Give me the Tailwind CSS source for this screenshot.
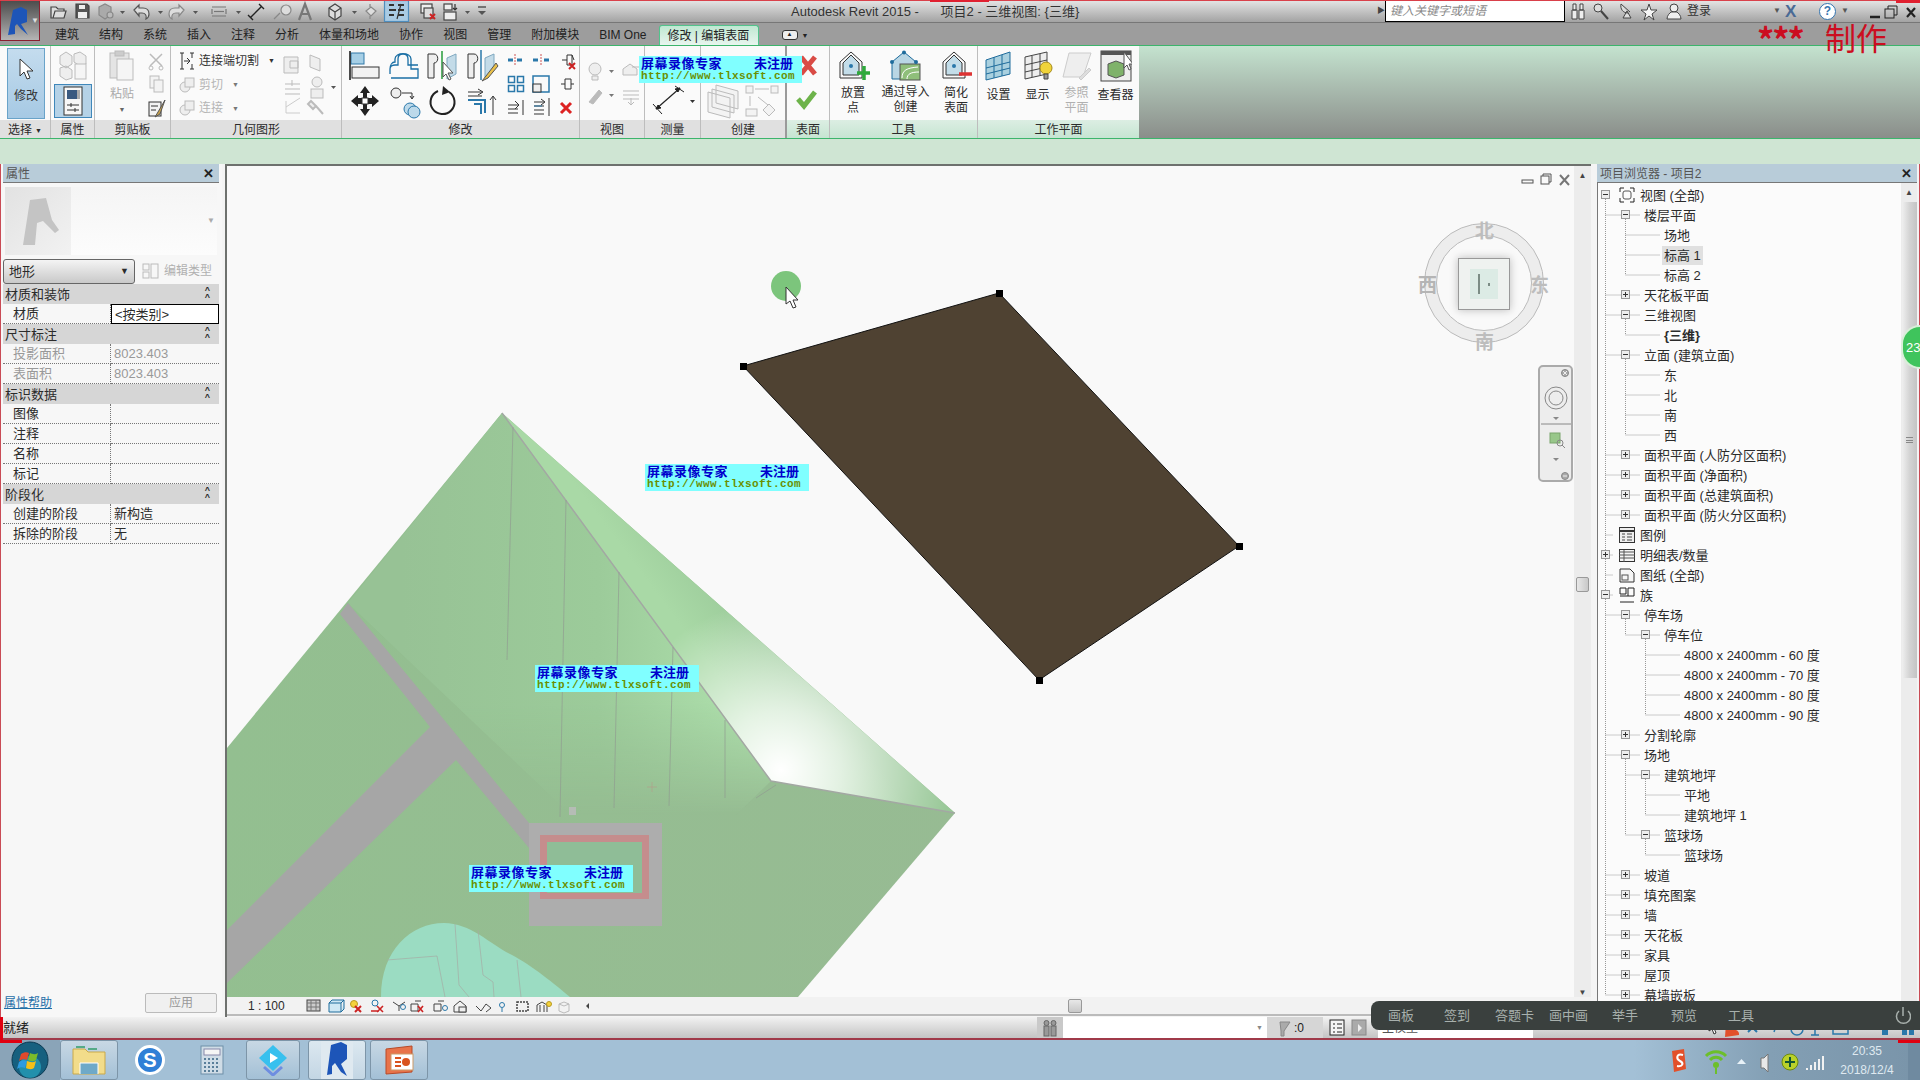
<!DOCTYPE html>
<html>
  <head>
    <meta charset="UTF-8" />
    <title>Autodesk Revit 2015</title>
    <script src="https://cdn.jsdelivr.net/npm/@tailwindcss/browser@4"></script>
  </head>
  <body class="relative flex flex-col w-[1920px] h-[1080px] overflow-hidden bg-[#f4f4f4] text-[12px] leading-none text-[#2b2b2b] font-['Liberation_Sans','Noto_Sans_CJK_SC',sans-serif]">
    <!-- title bar -->
    <header class="flex items-center h-[23px] pl-[46px] bg-gradient-to-b from-[#e6e6e6] to-[#a3a3a3] border-b border-[#777]">
      <svg class="w-[450px] h-[22px]" viewBox="46 0 450 22" fill="none" stroke="#444" stroke-width="1.2">
        <path d="M51 7h5l2 2h6v2H55l-2 7h-2zM53 18h11l2-7H55" fill="#ddd" />
        <path d="M76 4h11l2 2v12H76z" fill="#555" /><rect x="79" y="5" width="6" height="4" fill="#eee" stroke="none" /><rect x="78" y="12" width="9" height="6" fill="#eee" stroke="none" />
        <path d="M99 7l6-3 6 3v8l-6 4-6-4z" fill="#aaa" stroke="#888" /><circle cx="110" cy="15" r="3" fill="#bbb" stroke="#888" />
        <path d="M120 11h5l-2.500 3z" fill="#555" stroke="none" />
        <path d="M134 10l5-5v3h4c5 0 6 3 6 6 0 2-1 4-3 5 1-4-1-6-4-6h-3v3z" fill="#ddd" stroke="#555" />
        <path d="M158 11h5l-2.500 3z" fill="#555" stroke="none" />
        <path d="M184 10l-5-5v3h-4c-5 0-6 3-6 6 0 2 1 4 3 5-1-4 1-6 4-6h3v3z" fill="#ddd" stroke="#888" />
        <path d="M193 11h5l-2.500 3z" fill="#555" stroke="none" />
        <path d="M212 7h14M212 16h14M212 9v5M226 9v5" stroke="#777" /><path d="M214 11.500h10" stroke="#777" />
        <path d="M236 11h5l-2.500 3z" fill="#555" stroke="none" />
        <path d="M250 18l12-12M248 15l5 5M259 4l5 5" stroke="#222" stroke-width="1.4" />
        <circle cx="286" cy="10" r="5" fill="#ddd" stroke="#888" /><path d="M274 19l6-6" stroke="#888" />
        <path d="M299 20l6-16 6 16M301 14h8" stroke="#777" stroke-width="2.200" />
        <path d="M329 8l6-4 6 4v8l-6 4-6-4z" fill="#ddd" stroke="#444" /><path d="M329 8l6 4 6-4M335 12v8" />
        <path d="M352 11h5l-2.500 3z" fill="#555" stroke="none" />
        <path d="M370 4v3M370 16v3" stroke="#888" /><path d="M366 11l5-4 5 4-5 5z" fill="#ddd" stroke="#888" />
        <rect x="384.500" y="0.500" width="24" height="21" fill="#a9cbe4" stroke="#4f8dbd" />
        <path d="M389 5h5M389 10h7M389 15h5M398 5h6M398 10h6M398 15h6" stroke="#333" stroke-width="2" /><path d="M401 4l-4 15" stroke="#333" />
        <rect x="421" y="4" width="11" height="9" fill="#eee" /><rect x="424" y="8" width="9" height="10" fill="#ddd" /><path d="M430 14l5 5M435 14l-5 5" stroke="#c22" stroke-width="2" />
        <rect x="444" y="4" width="8" height="6" fill="#eee" /><rect x="444" y="12" width="12" height="8" fill="#eee" /><path d="M455 4v6M453 8l2 2 2-2" stroke="#333" />
        <path d="M465 11h5l-2.500 3z" fill="#555" stroke="none" />
        <path d="M478 7h8" stroke="#555" stroke-width="1.500" /><path d="M478 11h8l-4 4z" fill="#555" stroke="none" />
      </svg>
      <p class="ml-[295px] w-[300px] pt-[1px] text-[13px] text-[#333] whitespace-pre">Autodesk Revit 2015 -      项目2 - 三维视图: {三维}</p>
      <span class="ml-[286px] text-[8px] text-[#444] w-[8px]">▶</span>
      <div class="flex items-center w-[180px] h-[22px] -mt-[1px] pl-[4px] bg-white border border-black text-[#888] italic">键入关键字或短语</div>
      <svg class="w-[118px] h-[22px] ml-[4px]" viewBox="1568 0 118 22" fill="none" stroke="#444">
        <path d="M1571 10h5v9h-5zM1578 10h5v9h-5zM1572 4h3v6h-3zM1579 4h3v6h-3z" fill="#eee" />
        <circle cx="1597" cy="8" r="4" fill="#ddd" /><path d="M1600 11l7 8" stroke-width="2" />
        <path d="M1620 4l9 8M1622 18l4-7 4 7zM1620 4c-1 5 2 9 7 9" fill="#ddd" />
        <path d="M1648 4l2 6h6l-5 4 2 6-5-4-5 4 2-6-5-4h6z" fill="#f5f5f5" />
        <circle cx="1673" cy="8" r="4" fill="#eee" /><path d="M1666 19c0-4 3-6 4-7h6c1 1 4 3 4 7z" fill="#eee" />
      </svg>
      <span class="text-[12px] text-[#333] w-[86px]">登录</span>
      <span class="text-[8px] text-[#555] w-[12px]">▼</span>
      <span class="text-[17px] font-bold text-[#4a6a95] w-[34px]">X</span>
      <span class="flex items-center justify-center w-[17px] h-[17px] mr-[5px] rounded-full border border-[#3575b0] bg-white text-[12px] font-bold text-[#3575b0]">?</span>
      <span class="text-[8px] text-[#555] w-[27px]">▼</span>
      <svg class="w-[50px] h-[20px]" viewBox="1868 0 50 20" stroke="#222" fill="none"><path d="M1870 16h10" stroke-width="2.500" /><rect x="1885" y="8" width="9" height="9" /><path d="M1888 8V5h9v9h-3" /><path d="M1907 7l8 9M1915 7l-8 9" stroke-width="2.200" /></svg>
    </header>

    <!-- tabs -->
    <nav class="flex items-center gap-x-[20px] h-[22px] pl-[55px] pt-[2px] bg-[#9d9d9d] text-[#222]">
      <span>建筑</span><span>结构</span><span>系统</span><span>插入</span><span>注释</span><span>分析</span><span>体量和场地</span><span>协作</span><span>视图</span><span>管理</span><span>附加模块</span><span>BIM One</span>
      <span class="flex items-center h-[20px] w-[100px] -mx-[8px] px-[8px] rounded-t-[3px] bg-gradient-to-b from-[#bfe8d2] to-[#e8f5ee] border border-b-0 border-[#52c38c] whitespace-nowrap">修改 | 编辑表面</span>
      <span class="ml-[11px] w-[16px] h-[10px] rounded-[3px] border border-[#333] bg-[#eee] text-[6px] text-center">▲</span>
      <span class="-ml-[16px] text-[7px]">▼</span>
    </nav>

    <!-- ribbon -->
    <section class="flex h-[94px] border-y border-[#3cb56c] bg-gradient-to-b from-[#c4e3cf] to-[#8a8e8a]">
      <div class="flex flex-col w-[51px] bg-[#fafafa] border-r border-[#bdbdbd]">
        <div class="h-[74px] px-[7px] pt-[2px]">
          <div class="flex flex-col items-center w-[38px] h-[71px] pt-[8px] border border-[#69a3c9] bg-gradient-to-b from-[#c4dcee] to-[#a6c9e4]">
            <svg class="w-[18px] h-[24px]" viewBox="0 0 18 24"><path d="M3 2v17l4-4 3 7 3-1-3-7h6z" fill="#fff" stroke="#333" /></svg>
            <span class="mt-[9px] text-[#333]">修改</span>
          </div>
        </div>
        <div class="flex items-center justify-center h-[18px] pt-[2px] bg-[#e0e0e0]">选择 <span class="ml-[3px] text-[7px]">▼</span></div>
      </div>
      <div class="flex flex-col w-[44px] bg-[#fafafa] border-r border-[#bdbdbd]">
        <div class="flex flex-col items-center h-[74px] pt-[4px]">
          <svg class="w-[30px] h-[31px]" viewBox="0 0 30 31" fill="#eee" stroke="#bbb"><path d="M2 6l6-4 6 4v8l-6 4-6-4zM16 4l6-2 6 4v8l-6 2-6-4zM2 18l6-2 6 4v8l-6 2-6-4z" /><rect x="17" y="14" width="11" height="15" fill="#f5f5f5" /></svg>
          <div class="flex items-center justify-center w-[38px] h-[34px] mt-[3px] border border-[#3f87ba] bg-[#b5d2e7]">
            <svg class="w-[20px] h-[30px]" viewBox="0 0 20 30"><rect x="1" y="1" width="18" height="28" fill="#f7f7f7" stroke="#333" /><rect x="4" y="4" width="10" height="9" fill="#3b5a80" /><rect x="14" y="4" width="3" height="9" fill="#aaa" /><path d="M4 19h12M4 24h12M8 17v4M12 22v4" stroke="#333" /></svg>
          </div>
        </div>
        <div class="flex items-center justify-center h-[18px] pt-[2px] bg-[#e0e0e0]">属性</div>
      </div>
      <div class="flex flex-col w-[76px] bg-[#fafafa] border-r border-[#bdbdbd]">
        <div class="flex h-[74px] pl-[13px] pt-[4px]">
          <div class="flex flex-col items-center w-[28px] text-[#aaa]">
            <svg class="w-[26px] h-[31px]" viewBox="0 0 26 31" fill="#e4e4e4" stroke="#bbb"><rect x="1" y="3" width="19" height="25" /><rect x="6" y="1" width="9" height="5" fill="#ccc" /><rect x="8" y="9" width="16" height="21" fill="#f5f5f5" /></svg>
            <span class="mt-[7px]">粘贴</span><span class="mt-[6px] text-[7px] text-[#666]">▼</span>
          </div>
          <svg class="w-[20px] h-[70px] ml-[11px]" viewBox="0 0 20 70" fill="none" stroke="#bbb"><path d="M3 4l12 12M15 4L3 16" stroke-width="1.500" /><circle cx="4" cy="18" r="2" /><circle cx="14" cy="18" r="2" /><rect x="3" y="26" width="9" height="12" fill="#f3f3f3" /><rect x="7" y="30" width="9" height="12" fill="#f3f3f3" /><rect x="2" y="52" width="12" height="14" fill="#f3f3f3" stroke="#333" /><path d="M4 56h7M4 60h5" stroke="#333" /><path d="M18 50l-7 12-3 5 5-3z" fill="#c9a24c" stroke="#555" /></svg>
        </div>
        <div class="flex items-center justify-center h-[18px] pt-[2px] bg-[#e0e0e0]">剪贴板</div>
      </div>
      <div class="flex flex-col w-[171px] bg-[#fafafa] border-r border-[#bdbdbd]">
        <div class="flex h-[74px] pl-[8px] pt-[3px]">
          <div class="flex flex-col w-[102px]">
            <div class="flex items-center h-[24px] gap-x-[4px] text-[#333] whitespace-nowrap">
              <svg class="w-[16px] h-[18px]" viewBox="0 0 16 18" fill="none" stroke="#333"><path d="M1 1h4M3 1v16M1 17h4M15 1h-4M13 1v5M13 12v5M11 17h4M5 9h6M8 6l3 3-3 3" /></svg>连接端切割<span class="ml-[5px] text-[7px]">▼</span>
            </div>
            <div class="flex items-center h-[24px] gap-x-[4px] text-[#b5b5b5]">
              <svg class="w-[16px] h-[18px]" viewBox="0 0 16 18" fill="#eee" stroke="#bbb"><circle cx="6" cy="11" r="5" /><rect x="6" y="2" width="9" height="9" /></svg>剪切<span class="ml-[5px] text-[7px] text-[#777]">▼</span>
            </div>
            <div class="flex items-center h-[24px] gap-x-[4px] text-[#b5b5b5]">
              <svg class="w-[16px] h-[18px]" viewBox="0 0 16 18" fill="#eee" stroke="#bbb"><circle cx="6" cy="11" r="5" /><rect x="6" y="2" width="9" height="9" /></svg>连接<span class="ml-[5px] text-[7px] text-[#777]">▼</span>
            </div>
          </div>
          <svg class="w-[56px] h-[70px]" viewBox="280 48 56 70" fill="#eee" stroke="#bbb"><path d="M283 56h14v16h-14zM289 60h8v7h-8z" /><path d="M309 54l10 4v12l-10-4z" /><path d="M284 83h15M284 88h15M284 93h15M291 79v6" /><circle cx="316" cy="81" r="5" /><rect x="310" y="88" width="12" height="9" /><path d="M330 85h5l-2.500 3z" fill="#555" stroke="none" /><path d="M285 106l14-9M285 112h14M285 100v12" stroke="#ccc" /><path d="M310 100l5 5-3 3-5-5zM315 105l7 8" stroke-width="2" /></svg>
        </div>
        <div class="flex items-center justify-center h-[18px] pt-[2px] bg-[#e0e0e0]">几何图形</div>
      </div>
      <div class="flex flex-col w-[238px] bg-[#fafafa] border-r border-[#bdbdbd]">
        <svg class="w-[238px] h-[74px]" viewBox="342 45 238 74" fill="none" stroke="#333">
          <rect x="351" y="52" width="13" height="11" fill="#a6cfe6" stroke="#3179a8" /><rect x="352" y="66" width="27" height="11" fill="#f2f2f2" /><path d="M350 50v29" stroke="#111" stroke-width="1.500" />
          <path d="M390 73v-5c0-3 3-4 5-4h3v-6c0-3 2-5 5-5s5 2 5 5v6h10M391 77h27v-9h-7v-10c0-7-16-7-16 0v3c-3 0-5 3-5 7" stroke="#1a6fa5" stroke-width="1.300" />
          <path d="M428 53h6c5 0 5 9 0 9v15h-6z" fill="#eee" /><path d="M442 50v28" stroke="#5bb36a" stroke-width="2" /><path d="M447 57l9-4v20l-9 5z" fill="#c3dbe8" stroke="#7fa8c0" /><path d="M443 61v15l3-3 3 6 2-1-3-6h5z" fill="#fff" stroke="#555" />
          <path d="M468 53h6c5 0 5 9 0 9v15h-6z" fill="#eee" /><path d="M481 49v30" stroke="#2a78aa" stroke-width="1.500" /><path d="M485 57l9-4v16l-9 9z" fill="#c3dbe8" stroke="#7fa8c0" /><path d="M496 62l-10 13-4 5 6-3 10-12z" fill="#e9c04a" stroke="#555" />
          <path d="M508 59h5M517 59h5" stroke="#2a78aa" stroke-width="3" /><path d="M515 53v12" stroke="#c55" stroke-dasharray="2 1" />
          <path d="M533 59h5M544 59h5" stroke="#2a78aa" stroke-width="3" /><path d="M541 53v12" stroke="#c55" stroke-dasharray="2 1" />
          <path d="M562 59h5M567 54v10h5v-10zM572 54l2 5" /><path d="M569 62l6 6M575 62l-6 6" stroke="#c22" stroke-width="2" />
          <rect x="508.500" y="75.500" width="6" height="6" stroke="#2a78aa" stroke-width="1.500" /><rect x="517.500" y="75.500" width="6" height="6" stroke="#2a78aa" stroke-width="1.500" /><rect x="508.500" y="84.500" width="6" height="6" stroke="#2a78aa" stroke-width="1.500" /><rect x="517.500" y="84.500" width="6" height="6" stroke="#2a78aa" stroke-width="1.500" />
          <rect x="533" y="75" width="16" height="16" stroke="#2a78aa" stroke-width="1.500" /><rect x="533" y="83" width="8" height="8" fill="#eee" />
          <path d="M561 83h4M565 78v10h6v-10zM571 83h3" />
          <path d="M508 104h10M508 108h10M508 112h10M515 100l4 4-4 4M523 99v15" />
          <path d="M534 101h10M534 105h10M534 109h10M534 113h10M541 98l4 3-4 3M549 97v18" /><path d="M534 105h8" stroke="#2a78aa" />
          <path d="M561 102l10 10M571 102l-10 10" stroke="#d22" stroke-width="3" />
          <path d="M365 85l5 7h-3v5h5v-3l7 6-7 6v-3h-5v5h3l-5 7-5-7h3v-5h-5v3l-7-6 7-6v3h5v-5h-3z" fill="#222" stroke="none" /><rect x="362" y="97" width="6" height="6" fill="#fff" />
          <circle cx="396" cy="92" r="5" fill="#eee" /><path d="M402 92h10v5M410 95l2 3 2-3" /><circle cx="410" cy="108" r="6" fill="#bcd9ea" stroke="#2a78aa" /><circle cx="414" cy="111" r="6" fill="#bcd9ea" stroke="#2a78aa" />
          <path d="M449 91a12 12 0 1 1-11-1" stroke="#222" stroke-width="2" /><path d="M443 85l7 6-8 3z" fill="#222" stroke="none" />
          <path d="M468 91h14M468 95h14M478 88l5 3-5 3" /><path d="M468 99h17v13M474 103h7v10" stroke="#2a78aa" stroke-width="2" /><path d="M493 114V96M490 99l3-4 3 4" />
        </svg>
        <div class="flex items-center justify-center h-[18px] pt-[2px] bg-[#e0e0e0]">修改</div>
      </div>
      <div class="flex flex-col w-[65px] bg-[#fafafa] border-r border-[#bdbdbd]">
        <svg class="w-[65px] h-[74px]" viewBox="580 45 65 74" fill="#eee" stroke="#bbb"><circle cx="595" cy="68" r="6" /><path d="M592 75h6v4h-6z" /><path d="M609 69h5l-2.500 3z" fill="#777" stroke="none" /><path d="M623 74v-6l7-5 7 5v6z" /><path d="M640 66v7M632 66h8" /><path d="M589 101l10-12 3 3-9 11z" fill="#bbb" /><path d="M609 93h5l-2.500 3z" fill="#777" stroke="none" /><path d="M623 90h16M623 94h16M623 98h16M631 97v6M628 101l3 3 3-3" fill="none" /></svg>
        <div class="flex items-center justify-center h-[18px] pt-[2px] bg-[#e0e0e0]">视图</div>
      </div>
      <div class="flex flex-col w-[56px] bg-[#fafafa] border-r border-[#bdbdbd]">
        <svg class="w-[56px] h-[74px]" viewBox="645 45 56 74" fill="none" stroke="#222"><path d="M656 108l24-21" stroke-width="1.200" /><path d="M653 103l9 10M675 85l9 6" /><path d="M656 108l5-1-3-3zM680 87l-5 1 3 3z" fill="#222" /><path d="M690 99h5l-2.500 3z" fill="#333" stroke="none" /></svg>
        <div class="flex items-center justify-center h-[18px] pt-[2px] bg-[#e0e0e0]">测量</div>
      </div>
      <div class="flex flex-col w-[84px] bg-[#fafafa]">
        <svg class="w-[84px] h-[74px]" viewBox="701 45 84 74" fill="#f3f3f3" stroke="#bbb"><path d="M716 84l22 6v18l-22-6zM712 88l22 6v18l-22-6zM708 91l22 6v20l-22-6z" /><rect x="746" y="85" width="7" height="7" /><rect x="771" y="85" width="7" height="7" /><path d="M755 88h14M750 95v10M758 96l10 8" fill="none" /><rect x="746" y="108" width="11" height="7" /><path d="M769 103l6 6-6 6-6-6z" /></svg>
        <div class="flex items-center justify-center h-[18px] pt-[2px] bg-[#e0e0e0]">创建</div>
      </div>
      <div class="w-[2px] bg-[#9a9a9a]"></div>
      <div class="flex flex-col w-[43px] bg-[#fafafa] border-r border-[#bdbdbd]">
        <svg class="w-[43px] h-[74px]" viewBox="787 45 43 74" fill="none"><path d="M801 56l14 17M815 56l-14 17" stroke="#d94b45" stroke-width="5" /><path d="M798 98l6 7 11-14" stroke="#6db34a" stroke-width="5" /></svg>
        <div class="flex items-center justify-center h-[18px] pt-[2px] bg-gradient-to-b from-[#dceee3] to-[#c6e5d2]">表面</div>
      </div>
      <div class="flex flex-col w-[148px] bg-[#fafafa] border-r border-[#bdbdbd]">
        <div class="flex h-[74px] pt-[4px] pl-[4px]">
          <div class="flex flex-col items-center w-[38px] text-center leading-[15px]">
            <svg class="w-[34px] h-[32px] mb-[4px]" viewBox="0 0 34 32" fill="none"><path d="M4 12L15 2l11 10v16H4z" stroke="#333" /><path d="M7 13l8-8 8 8v12H7z" fill="#c3dde9" stroke="#333" /><circle cx="15" cy="16" r="2" fill="#2a78aa" /><path d="M28 16v14M21 23h13" stroke="#2faa3c" stroke-width="3.500" /></svg>放置<br />点
          </div>
          <div class="flex flex-col items-center w-[67px] text-center leading-[15px]">
            <svg class="w-[34px] h-[32px] mb-[3px]" viewBox="0 0 34 32"><path d="M3 12L15 2l12 10v17H3z" fill="#b9d6e4" stroke="#1f6c9c" /><rect x="11" y="14" width="20" height="16" fill="#8fbf7a" stroke="#555" /><path d="M13 28c0-8 5-10 16-11M18 29c0-5 4-7 12-7" fill="none" stroke="#fff" /><circle cx="15" cy="2.500" r="2" fill="#1f6c9c" /><circle cx="3" cy="12" r="2" fill="#1f6c9c" /><circle cx="27" cy="12" r="2" fill="#1f6c9c" /></svg><span>通过导入</span><span>创建</span>
          </div>
          <div class="flex flex-col items-center w-[34px] text-center leading-[15px]">
            <svg class="w-[34px] h-[32px] mb-[4px]" viewBox="0 0 34 32" fill="none"><path d="M4 12L15 2l11 10v16H4z" stroke="#333" /><path d="M7 13l8-8 8 8v12H7z" fill="#c3dde9" stroke="#333" /><circle cx="15" cy="16" r="2" fill="#2a78aa" /><path d="M20 24h13" stroke="#d33" stroke-width="3.500" /></svg>简化<br />表面
          </div>
        </div>
        <div class="flex items-center justify-center h-[18px] pt-[2px] bg-gradient-to-b from-[#dceee3] to-[#c6e5d2]">工具</div>
      </div>
      <div class="flex flex-col w-[161px] bg-[#fafafa]">
        <div class="flex h-[74px] pt-[4px] pl-[1px]">
          <div class="flex flex-col items-center w-[39px] text-center">
            <svg class="w-[32px] h-[32px] mb-[7px]" viewBox="0 0 32 32" fill="#a9d0df" stroke="#1f6c9c"><path d="M3 10l24-8v22L3 30z" /><path d="M3 18l24-6M3 24l24-6M11 7v21M19 5v21" fill="none" /></svg>设置
          </div>
          <div class="flex flex-col items-center w-[39px] text-center">
            <svg class="w-[32px] h-[32px] mb-[7px]" viewBox="0 0 32 32" fill="none" stroke="#444"><path d="M3 7l22-5v22L3 29z" fill="#eee" /><path d="M3 15l22-5M3 22l22-5M10 6v21M18 4v21" /><circle cx="24" cy="18" r="6" fill="#f0d33a" stroke="#a58a1a" /><path d="M22 24h4v5h-4z" fill="#999" /></svg>显示
          </div>
          <div class="flex flex-col items-center w-[39px] text-center text-[#b0b0b0] leading-[15px]">
            <svg class="w-[32px] h-[32px] mb-[4px]" viewBox="0 0 32 32" fill="#eee" stroke="#ccc"><path d="M8 3h22L22 27H2z" /><path d="M30 20l-10 10-2-2 10-10z" fill="#ddd" /></svg>参照<br />平面
          </div>
          <div class="flex flex-col items-center w-[39px] text-center">
            <svg class="w-[32px] h-[32px] mb-[7px]" viewBox="0 0 32 32"><rect x="1" y="1" width="30" height="30" fill="#eee" stroke="#444" /><rect x="1" y="1" width="30" height="4" fill="#555" /><path d="M8 14l8-3 8 3v11l-8 3-8-3z" fill="#7fb26a" stroke="#555" /><path d="M24 2v16l3-3 2 5 2-1-2-5h4z" fill="#fff" stroke="#555" /></svg>查看器
          </div>
        </div>
        <div class="flex items-center justify-center h-[18px] pt-[2px] bg-gradient-to-b from-[#dceee3] to-[#c6e5d2]">工作平面</div>
      </div>
    </section>

    <div class="h-[25px] bg-[#cfe5d3]"></div>

    <!-- workspace -->
    <main class="flex h-[853px]">
      <!-- properties -->
      <aside class="flex flex-col w-[222px] h-full pl-[2px] pr-[3px] border-l border-[#c94b55] bg-[#f7f7f7]">
        <div class="flex items-center justify-between h-[18px] pl-[3px] pr-[5px] pt-[1px] bg-[#b8ccd9] text-[#555]">属性<span class="text-[13px] font-bold text-[#222]">✕</span></div>
        <div class="h-[1px] bg-[#777] mb-[4px]"></div>
        <div class="flex h-[68px] mx-[2px]">
          <div class="flex items-center justify-center w-[66px] bg-gradient-to-br from-[#e2e2e2] to-[#f2f2f2]">
            <svg class="w-[44px] h-[54px]" viewBox="0 0 44 54" fill="#c4c4c4"><path d="M14 6l16-2 6 22 7 10-4 3-12-12-6 2-2 22H7z" /></svg>
          </div>
          <div class="flex items-center justify-end flex-1 pr-[2px] bg-gradient-to-b from-[#f5f5f5] to-[#fcfcfc] text-[8px] text-[#aaa]">▼</div>
        </div>
        <div class="flex items-center h-[26px] mt-[3px]">
          <div class="flex items-center justify-between w-[132px] h-[25px] px-[5px] rounded-[3px] border border-[#666] bg-gradient-to-b from-[#f4f4f4] to-[#c9c9c9] text-[13px]">地形<span class="text-[9px]">▼</span></div>
          <svg class="w-[18px] h-[16px] ml-[7px]" viewBox="0 0 18 16" fill="none" stroke="#bbb"><rect x="1" y="1" width="6" height="6" /><rect x="1" y="9" width="6" height="6" /><rect x="9" y="1" width="7" height="14" /></svg>
          <span class="ml-[4px] text-[#b0b0b0]">编辑类型</span>
        </div>
        <div id="props"></div>
        <div class="flex-1"></div>
        <div class="flex items-center justify-between h-[22px] mb-[3px] pr-[2px]">
          <a class="ml-[1px] text-[#1f6fa8] underline" href="#">属性帮助</a>
          <span class="flex items-center justify-center w-[72px] h-[20px] rounded-[2px] border border-[#bbb] bg-[#f0f0f0] text-[#999]">应用</span>
        </div>
      </aside>

      <!-- view -->
      <div class="flex flex-col w-[1366px] ml-[3px] h-full border-t-2 border-l-2 border-[#6e716e]">
        <div class="flex h-[831px]">
          <div class="relative w-[1348px] bg-[#f9f9f9] overflow-hidden">
            <svg class="absolute inset-0 w-[1348px] h-[831px]" viewBox="226 166 1348 831">
              <defs>
                <linearGradient id="slope" gradientUnits="userSpaceOnUse" x1="400" y1="600" x2="760" y2="600"><stop offset="0" stop-color="#97c295" /><stop offset="0.55" stop-color="#9ccb9a" /><stop offset="1" stop-color="#b0e2ae" /></linearGradient>
                <linearGradient id="fade" gradientUnits="userSpaceOnUse" x1="0" y1="700" x2="0" y2="815"><stop offset="0" stop-color="#fff" /><stop offset="1" stop-color="#000" /></linearGradient>
                <mask id="slopefade" maskUnits="userSpaceOnUse" x="226" y="166" width="1348" height="831"><rect x="226" y="166" width="1348" height="831" fill="url(#fade)" /></mask>
                <linearGradient id="band" gradientUnits="userSpaceOnUse" x1="660" y1="600" x2="720" y2="555"><stop offset="0" stop-color="#a9d9a6" /><stop offset="1" stop-color="#99c898" /></linearGradient>
                <radialGradient id="glow" gradientUnits="userSpaceOnUse" cx="780" cy="770" r="170"><stop offset="0" stop-color="#fff" /><stop offset="0.35" stop-color="#fff" stop-opacity="0.7" /><stop offset="1" stop-color="#fff" stop-opacity="0" /></radialGradient>
                <linearGradient id="lower" gradientUnits="userSpaceOnUse" x1="226" y1="760" x2="950" y2="900"><stop offset="0" stop-color="#93bf90" /><stop offset="1" stop-color="#97bb93" /></linearGradient>
              </defs>
              <polygon points="501,413 226,748 226,997 797,997 954,813" fill="url(#lower)" />
              <polygon points="501,413 770,781 735,815 570,815 347,603" fill="url(#slope)" mask="url(#slopefade)" />
              <polygon points="501,413 954,813 770,781" fill="url(#band)" />
              <polygon points="501,413 954,813 770,781" fill="url(#glow)" />
              <path d="M501,413 L770,781 L954,813" fill="none" stroke="#a3a8a3" stroke-width="1.500" />
              <path d="M512,427 L506,660 M565,500 L559,817 M618,572 L613,808 M672,647 L668,806 M724,720 L724,798 M775,785 L755,798" fill="none" stroke="#909c90" stroke-width="0.700" />
              <polygon points="347,603 339,614 429,727 226,930 226,983 455,760 528,848 528,823" fill="#a6a6a6" />
              <rect x="568" y="807" width="7" height="8" fill="#b5bcb5" />
              <rect x="528" y="823" width="133" height="103" fill="#adadad" />
              <rect x="539" y="835" width="109" height="64" fill="#c58d8d" />
              <rect x="546" y="842" width="95" height="51" fill="#8fbd97" />
              <path d="M380,997 C380,950 410,923 443,923 C470,923 490,945 511,955 C530,965 555,985 569,997 Z" fill="#9bdcc2" />
              <path d="M454,924 L458,985 L468,997 M477,930 L482,975 L492,982 L493,997 M516,960 L520,997 M386,960 L436,956 L444,997" fill="none" stroke="#a5aca5" stroke-width="0.700" />
              <path d="M651,782v10M646,787h10" stroke="#b59a8a" stroke-width="0.600" />
              <polygon points="998,293 1238,546 1038,680 742,366" fill="#4f4232" stroke="#111" stroke-width="1" />
              <g fill="#000"><rect x="739" y="363" width="7" height="7" /><rect x="995" y="290" width="7" height="7" /><rect x="1235" y="543" width="7" height="7" /><rect x="1035" y="677" width="7" height="7" /></g>
              <circle cx="785" cy="286" r="15" fill="#7cc57c" />
              <path d="M785,287 v17 l4,-3 l3,7 l3,-1 l-3,-7 h5 z" fill="#fff" stroke="#333" />
            </svg>
            <div class="absolute left-[418px] top-[298px] flex flex-col justify-center w-[164px] h-[27px] pl-[2px] bg-[#80ffff]">
              <p class="flex justify-between w-[152px] font-['Noto_Sans_CJK_SC',sans-serif] font-bold text-[13px] leading-[13px] text-[#0000cc]"><span class="tracking-[0.500px]">屏幕录像专家</span><span>未注册</span></p>
              <p class="font-['Liberation_Mono',monospace] font-bold text-[11px] leading-[14px] tracking-[0.400px] text-[#6a8f00]">http://www.tlxsoft.com</p>
            </div>
            <div class="absolute left-[308px] top-[499px] flex flex-col justify-center w-[164px] h-[27px] pl-[2px] bg-[#80ffff]">
              <p class="flex justify-between w-[152px] font-['Noto_Sans_CJK_SC',sans-serif] font-bold text-[13px] leading-[13px] text-[#0000cc]"><span class="tracking-[0.500px]">屏幕录像专家</span><span>未注册</span></p>
              <p class="font-['Liberation_Mono',monospace] font-bold text-[11px] leading-[14px] tracking-[0.400px] text-[#6a8f00]">http://www.tlxsoft.com</p>
            </div>
            <div class="absolute left-[242px] top-[699px] flex flex-col justify-center w-[164px] h-[27px] pl-[2px] bg-[#80ffff]">
              <p class="flex justify-between w-[152px] font-['Noto_Sans_CJK_SC',sans-serif] font-bold text-[13px] leading-[13px] text-[#0000cc]"><span class="tracking-[0.500px]">屏幕录像专家</span><span>未注册</span></p>
              <p class="font-['Liberation_Mono',monospace] font-bold text-[11px] leading-[14px] tracking-[0.400px] text-[#6a8f00]">http://www.tlxsoft.com</p>
            </div>
            <!-- view cube -->
            <svg class="absolute left-[1294px] top-[7px] w-[50px] h-[14px]" viewBox="0 0 50 14" fill="none" stroke="#555"><rect x="1" y="7" width="11" height="3" /><rect x="20" y="3" width="8" height="8" /><path d="M22 3V1h8v8h-2" /><path d="M39 2l9 10M48 2l-9 10" stroke="#777" stroke-width="2" /></svg>
            <div class="absolute left-[1197px] top-[57px] w-[120px] h-[120px] rounded-full border border-[#bbb] bg-[#ededed]"></div>
            <div class="absolute left-[1209px] top-[69px] w-[96px] h-[96px] rounded-full border border-[#bbb] bg-[#f9f9f9]"></div>
            <div class="absolute left-[1231px] top-[92px] flex items-center justify-center w-[52px] h-[52px] border border-[#999] bg-[#eff2f0] shadow-[0_0_8px_#bbb]">
              <div class="flex items-center justify-center w-[28px] h-[30px] bg-[#dcebe5]"><span class="w-[2px] h-[20px] mr-[8px] bg-[#7c8c85]"></span><span class="w-[2px] h-[3px] bg-[#7c8c85]"></span></div>
            </div>
            <span class="absolute left-[1248px] top-[56px] text-[19px] font-bold text-[#bdbdbd]">北</span>
            <span class="absolute left-[1248px] top-[167px] text-[19px] font-bold text-[#bdbdbd]">南</span>
            <span class="absolute left-[1191px] top-[110px] text-[19px] font-bold text-[#b5b5b5]">西</span>
            <span class="absolute left-[1303px] top-[110px] text-[19px] font-bold text-[#bdbdbd]">东</span>
            <!-- navigation bar -->
            <div class="absolute left-[1311px] top-[199px] flex flex-col items-center w-[35px] h-[117px] rounded-[5px] border-2 border-[#aaa] bg-[#ededed]">
              <svg class="w-[31px] h-[113px]" viewBox="0 0 31 113" fill="none" stroke="#888"><circle cx="25" cy="6" r="3.500" fill="#aaa" /><path d="M23 4l4 4M27 4l-4 4" stroke="#eee" /><circle cx="16" cy="31" r="11" /><circle cx="16" cy="31" r="7" /><path d="M13 50h6l-3 3z" fill="#888" stroke="none" /><path d="M1 57h30" /><rect x="10" y="66" width="10" height="10" fill="#98c78a" stroke="#7aa56c" /><circle cx="20" cy="76" r="3" /><path d="M22 78l3 3" /><path d="M13 91h6l-3 3z" fill="#888" stroke="none" /><circle cx="25" cy="109" r="3.500" fill="#aaa" /><path d="M23 109h4" stroke="#eee" /></svg>
            </div>
          </div>
          <div class="flex flex-col items-center justify-between w-[17px] py-[6px] bg-[#ececec] text-[8px] text-[#444]">
            <span>▲</span>
            <span class="w-[13px] h-[15px] rounded-[2px] border border-[#999] bg-gradient-to-r from-[#e8e8e8] to-[#c8c8c8]"></span>
            <span class="-mb-[6px] text-[8px]">▼</span>
          </div>
        </div>
        <div class="flex items-center h-[18px] bg-[#f2f2f2] border-b border-[#bbb]">
          <span class="ml-[21px] w-[58px] whitespace-pre">1 : 100</span>
          <svg class="w-[290px] h-[18px]" viewBox="305 997 290 18" fill="none" stroke="#444">
            <rect x="306" y="1000" width="13" height="11" fill="#ccc" /><path d="M306 1003h13M306 1007h13M310 1000v11M315 1000v11" stroke="#777" />
            <path d="M328 1003h12v9h-12zM328 1003l3-3h12l-3 3M340 1012l3-3v-9" fill="#cfe8f4" stroke="#1f6c9c" />
            <circle cx="353" cy="1004" r="3.500" fill="#f5d23c" stroke="#b89a20" /><path d="M354 1006l6 6M360 1006l-6 6" stroke="#c22" stroke-width="2" />
            <circle cx="374" cy="1003" r="3" stroke="#2a78aa" /><path d="M370 1011h8M376 1006l6 6M382 1006l-6 6" stroke="#c22" stroke-width="1.600" />
            <path d="M392 1002l6 4v5M404 1002l-6 4" /><circle cx="402" cy="1007" r="2.500" stroke="#2a78aa" />
            <path d="M410 1004h7v7h-7zM414 1001h6" /><path d="M417 1006l5 6M422 1006l-5 6" stroke="#c22" stroke-width="1.600" />
            <path d="M433 1004h7v7h-7zM437 1001h6" /><circle cx="444" cy="1008" r="2.500" stroke="#2a78aa" />
            <path d="M453 1006l6-5 6 5v6h-12z" /><rect x="458" y="1007" width="7" height="5" fill="#eee" />
            <path d="M475 1006l5 5 5-7 5 4-5 4" /><circle cx="501" cy="1005" r="2.500" stroke="#2a78aa" /><path d="M501 1008v4" stroke="#2a78aa" />
            <rect x="516" y="1002" width="11" height="9" stroke-dasharray="2 1" stroke-width="1.500" />
            <path d="M536 1012v-7l5-3 5 3v7M539 1012v-7M543 1012v-7" /><circle cx="548" cy="1004" r="2.500" fill="#f5d23c" stroke="#b89a20" />
            <path d="M558 1004l5-2 5 2v7l-5 2-5-2zM558 1004l5 2 5-2" stroke="#bbb" />
            <path d="M588 1003v6l-3-3z" fill="#444" stroke="none" />
          </svg>
          <span class="ml-[472px] w-[14px] h-[14px] rounded-[2px] border border-[#999] bg-gradient-to-b from-[#e8e8e8] to-[#c8c8c8]"></span>
        </div>
        <div class="flex-1 bg-[#f4f4f4] border-t border-[#bbb]"></div>
      </div>

      <!-- project browser -->
      <aside class="flex flex-col w-[324px] ml-[5px] h-full pr-[2px] border-r border-[#c94b55]">
        <div class="flex items-center justify-between h-[18px] ml-[1px] pl-[3px] pr-[5px] pt-[1px] bg-[#b8ccd9] text-[#555]">项目浏览器 - 项目2<span class="text-[13px] font-bold text-[#222]">✕</span></div>
        <div class="flex flex-1 min-h-0 ml-[1px] border-t border-l border-[#777]">
          <div class="relative flex-1 overflow-hidden bg-[#fbfbfb] pt-[2px]" id="tree"></div>
          <div class="flex flex-col items-center w-[16px] bg-[#ececec]">
            <span class="h-[19px] pt-[6px] text-[8px] text-[#444]">▲</span>
            <div class="flex items-center justify-center w-[15px] h-[476px] bg-gradient-to-r from-[#efefef] via-[#d4d4d4] to-[#c4c4c4]">
              <span class="w-[7px] h-[6px] border-y border-[#888] bg-[linear-gradient(#888,#888)] bg-[length:100%_1px] bg-center bg-no-repeat"></span>
            </div>
          </div>
        </div>
      </aside>
    </main>

    <!-- status bar -->
    <footer class="flex items-center h-[23px] bg-gradient-to-b from-[#f2f2f2] to-[#c4c4c4] border-b-2 border-[#a03a4a]">
      <span class="w-[1037px] pl-[3px] text-[13px] text-[#222]">就绪</span>
      <span class="flex items-center justify-center w-[26px] h-full bg-[#c9c9c9]"><svg class="w-[14px] h-[18px]" viewBox="0 0 14 18" fill="#999" stroke="#666"><rect x="1" y="7" width="5" height="10" /><rect x="8" y="7" width="5" height="10" /><circle cx="3.500" cy="4" r="2.500" /><circle cx="10.500" cy="4" r="2.500" /></svg></span>
      <span class="flex items-center justify-end w-[204px] h-full pr-[4px] bg-white text-[7px] text-[#888]">▼</span>
      <span class="flex items-center w-[56px] h-full pl-[12px] bg-[#d6d6d6] text-[#222]"><svg class="w-[12px] h-[18px] mr-[3px]" viewBox="0 0 12 18" fill="#aaa" stroke="#888"><path d="M1 3h10L5 12v5H2v-5z" /></svg>:0</span>
      <svg class="w-[55px] h-[20px]" viewBox="1323 1020 55 20" fill="none" stroke="#222"><rect x="1330" y="1022" width="14" height="15" fill="#f5f5f5" /><path d="M1333 1026h2M1337 1026h5M1333 1030h2M1337 1030h5M1333 1034h2M1337 1034h5" /><rect x="1352" y="1022" width="14" height="15" fill="#aaa" stroke="#888" /><path d="M1358 1026l4 4-4 4z" fill="#eee" stroke="none" /></svg>
      <span class="flex items-center w-[155px] h-full pl-[4px] bg-white text-[#555]">主模型</span>
      <span class="flex-1"></span>
      <svg class="w-[213px] h-[23px]" viewBox="1707 1017 213 23" fill="none">
        <path d="M1709 1020v12l3-2 2 5 2-1-2-5h4z" fill="#fff" stroke="#333" />
        <path d="M1726 1024c4-4 10-3 14-2l-2 5c-3-1-6-1-6 1 0 3 8 2 7 8l-14 2z" fill="#e2502a" />
        <path d="M1748 1024l9 9M1757 1024l-9 9" stroke="#2a78aa" stroke-width="2" /><path d="M1777 1024l-3 9" stroke="#2a78aa" stroke-width="1.500" />
        <circle cx="1797" cy="1030" r="6" stroke="#2a78aa" stroke-width="1.500" /><path d="M1815 1024a3 3 0 1 1 .1 0M1815 1030v6M1811 1036h8" stroke="#2a78aa" stroke-width="1.500" />
        <rect x="1833" y="1025" width="15" height="10" stroke="#2a78aa" stroke-width="1.500" /><rect x="1882" y="1027" width="6" height="9" fill="#2a78aa" /><rect x="1902" y="1027" width="5" height="9" fill="#2a78aa" /><rect x="1909" y="1027" width="5" height="9" fill="#2a78aa" />
      </svg>
    </footer>

    <!-- taskbar -->
    <div class="flex items-center flex-1 bg-[#a3c0d6]">
      <div class="flex items-center justify-center w-[60px] h-full bg-[#8aa4b8]">
        <svg class="w-[38px] h-[38px]" viewBox="0 0 38 38"><circle cx="19" cy="19" r="18" fill="#16607f" stroke="#0c3a52" /><circle cx="19" cy="26" r="11" fill="#2bb0c9" opacity="0.600" /><path d="M10 13c3-2 6-2 8-1l-2 7c-2-1-5-1-8 1z" fill="#e0492c" /><path d="M19 12c2 1 5 2 8 0l-2 7c-3 2-6 1-8 0z" fill="#7cbb2a" /><path d="M8 21c3-2 5-2 8-1l-2 7c-3-1-5-1-8 1z" fill="#2e9be0" /><path d="M16 20c3 1 6 2 9 0l-2 7c-3 2-6 1-8 0z" fill="#f5c018" /></svg>
      </div>
      <div class="flex items-center justify-center w-[58px] h-full rounded-[3px] border border-[#7d95a8] bg-gradient-to-b from-[#c8d8e4] to-[#a3c0d6]">
        <svg class="w-[34px] h-[30px]" viewBox="0 0 34 30"><path d="M1 4h12l3 3h17v22H1z" fill="#f2dc8a" stroke="#c9a94a" /><path d="M4 2h9M16 4h9" stroke="#5a8" stroke-width="2" /><path d="M8 29V18h18v11" fill="#6ea9c8" stroke="#fff" /></svg>
      </div>
      <div class="flex items-center justify-center w-[64px]">
        <span class="flex items-center justify-center w-[30px] h-[30px] rounded-full border-[3px] border-white bg-[#2f7fd6] text-[20px] font-bold text-white">S</span>
      </div>
      <div class="flex items-center justify-center w-[60px]">
        <svg class="w-[24px] h-[30px]" viewBox="0 0 24 30"><rect x="1" y="1" width="22" height="28" fill="#cfdce6" stroke="#6f8fa8" /><rect x="4" y="4" width="16" height="6" fill="#f5f5f5" stroke="#88a" /><path d="M4 14h16M4 18h16M4 22h16M4 26h16" stroke="#5a7f9a" stroke-width="2" stroke-dasharray="2 2" /></svg>
      </div>
      <div class="flex items-center justify-center w-[54px] h-full ml-[4px] rounded-[3px] border border-[#7d95a8] bg-gradient-to-b from-[#c8d8e4] to-[#a3c0d6]">
        <svg class="w-[30px] h-[32px]" viewBox="0 0 30 32"><path d="M15 1l14 13-14 13L1 14z" fill="#38c0ee" /><path d="M12 9l8 5-8 5z" fill="#fff" /><path d="M6 23l9 8 9-8" fill="none" stroke="#6e8de0" stroke-width="3" /></svg>
      </div>
      <div class="flex items-center justify-center w-[58px] h-full ml-[8px] rounded-[3px] border border-[#7d95a8] bg-gradient-to-b from-[#dce8f0] to-[#c3d6e4]">
        <svg class="w-[32px] h-[38px]" viewBox="0 0 32 38"><rect width="32" height="38" fill="#dfe9f0" /><path d="M10 4l10-3 6 3v14l-6 5 6 12-6-4-6-9-3 3v8l-5 1z" fill="#1d55b8" /></svg>
      </div>
      <div class="flex items-center justify-center w-[58px] h-full ml-[4px] rounded-[3px] border border-[#7d95a8] bg-gradient-to-b from-[#c8d8e4] to-[#a3c0d6]">
        <svg class="w-[32px] h-[30px]" viewBox="0 0 32 30"><path d="M3 4l26-3v26L3 29z" fill="#e8734a" stroke="#b74a28" /><rect x="8" y="9" width="22" height="16" fill="#fff" stroke="#c96" /><path d="M12 13h6M12 17h6M12 21h6" stroke="#d9531e" stroke-width="2" /><circle cx="23" cy="17" r="4" fill="#d9531e" /></svg>
      </div>
      <div class="flex-1"></div>
      <div class="flex items-center w-[274px] h-full bg-gradient-to-r from-[#a3c0d6] via-[#839fb4] to-[#7a95aa]">
        <svg class="w-[197px] h-[30px]" viewBox="1634 1045 197 30" fill="none">
          <path d="M1672 1051l12-2 2 20-12 3z" fill="#e2502a" /><path d="M1683 1055c-7-2-7 4-3 6 4 2 3 6-3 5" stroke="#fff" stroke-width="2" />
          <path d="M1706 1056a14 14 0 0 1 20 0M1710 1060a8 8 0 0 1 12 0" stroke="#6cbf2a" stroke-width="3" /><circle cx="1716" cy="1065" r="3" fill="#6cbf2a" /><path d="M1716 1068v6" stroke="#6cbf2a" stroke-width="2" />
          <path d="M1737 1064h9l-4.500-5z" fill="#e8f2f8" />
          <path d="M1761 1058h3l4-4v18l-4-4h-3z" fill="#e8e8e8" stroke="#777" />
          <circle cx="1790" cy="1062" r="8" fill="#b9d12a" stroke="#6c8a10" /><path d="M1790 1057v10M1785 1062h10" stroke="#153" stroke-width="2" />
          <path d="M1806 1070h2v-2h-2zM1810 1070h2v-5h-2zM1814 1070h2v-8h-2zM1818 1070h2v-11h-2zM1822 1070h2v-14h-2z" fill="#f2f2f2" />
        </svg>
        <div class="flex flex-col items-center gap-y-[7px] w-[72px] text-[#dfe9f0]"><span>20:35</span><span>2018/12/4</span></div>
      </div>
      <div class="w-[12px] h-full bg-[#6f8aa0]"></div>
    </div>

    <!-- logo, overlays -->
    <div class="absolute left-0 top-0 flex items-center w-[40px] h-[41px] pl-[7px] bg-gradient-to-b from-[#4d4d4d] to-[#b5b5b5] border border-[#8b2030]">
      <svg class="w-[20px] h-[28px]" viewBox="0 0 20 28"><path d="M5 3l8-3 6 3v12l-6 2 7 11-7-6-4-5-2 2v8l-7 1z" fill="#1d55b8" /></svg>
      <span class="ml-[3px] text-[8px] text-[#ddd]">▼</span>
    </div>
    <p class="absolute left-[1757px] top-[22px] flex items-start text-[#cc0d20] font-['Noto_Sans_CJK_SC',sans-serif] whitespace-nowrap"><span class="w-[66px] mt-[2px] text-[34px] font-bold tracking-[-2px] leading-[30px]">***</span><span class="ml-[2px] text-[31px] leading-[30px]">制作</span></p>
    <div class="absolute left-[639px] top-[56px] flex flex-col justify-center w-[163px] h-[27px] pl-[2px] bg-[#80ffff]">
      <p class="flex justify-between w-[152px] font-['Noto_Sans_CJK_SC',sans-serif] font-bold text-[13px] leading-[13px] text-[#0000cc]"><span class="tracking-[0.500px]">屏幕录像专家</span><span>未注册</span></p>
      <p class="font-['Liberation_Mono',monospace] font-bold text-[11px] leading-[14px] tracking-[0.400px] text-[#6a8f00]">http://www.tlxsoft.com</p>
    </div>
    <div class="absolute right-0 top-[325px] flex items-center w-[19px] h-[44px] pl-[3px] rounded-l-[22px] border-2 border-r-0 border-[#d8efd8] bg-[#3fc45c] text-[13px] text-white overflow-hidden">23</div>
    <div class="absolute left-[1371px] top-[1001px] flex items-center w-[549px] h-[29px] rounded-l-[8px] bg-[#3a403e] text-[13px] text-[#a8b0ad]">
      <span class="ml-[17px] w-[56px]">画板</span><span class="w-[51px]">签到</span><span class="w-[54px]">答题卡</span><span class="w-[63px]">画中画</span><span class="w-[59px]">举手</span><span class="w-[57px]">预览</span><span class="w-[167px]">工具</span>
      <svg class="w-[16px] h-[20px]" viewBox="0 0 16 20" fill="none" stroke="#a8b0ad" stroke-width="1.500"><path d="M8 1v9M4 5a7 7 0 1 0 9 0" /></svg>
    </div>
    <!-- screen recorder frame -->
    <div class="absolute left-0 top-0 w-full h-[1px] bg-[#d9404a]"></div>
    <div class="absolute left-[930px] top-0 w-[59px] h-[2px] bg-[#e02030]"></div>
    <div class="absolute right-0 top-0 w-[24px] h-[3px] bg-[#e02030]"></div>
    <div class="absolute left-0 top-[1017px] w-[3px] h-[25px] bg-[#e00010]"></div>
    <div class="absolute left-0 top-[1040px] w-[22px] h-[3px] bg-[#e00010]"></div>
    <div class="absolute right-0 top-[1040px] w-[22px] h-[3px] bg-[#e00010]"></div>

    <script type="text/javascript">
      const props = [
        ["h", "材质和装饰"],
        ["sel", "材质", "<按类别>"],
        ["h", "尺寸标注"],
        ["ro", "投影面积", "8023.403"],
        ["ro", "表面积", "8023.403"],
        ["h", "标识数据"],
        ["r", "图像", ""],
        ["r", "注释", ""],
        ["r", "名称", ""],
        ["r", "标记", ""],
        ["h", "阶段化"],
        ["r", "创建的阶段", "新构造"],
        ["r", "拆除的阶段", "无"],
      ];

      const propToHTML = ([kind, label, value]) => {
        if (kind === "h") {
          return `<div class="flex items-center justify-between h-[20px] pl-[2px] pr-[9px] bg-[#d6d6d6] text-[13px]">${label}<span class="text-[9px] font-bold leading-[7px] text-center">^<br />^</span></div>`;
        }
        const tone = kind === "ro" ? "text-[#999]" : "text-[#2b2b2b]";
        const val = kind === "sel"
          ? "border border-black bg-white pl-[3px] text-[#2b2b2b]"
          : "border-b border-dotted border-[#777] pl-[3px]";
        const escaped = value.replace("<", "&lt;").replace(">", "&gt;");
        return `<div class="flex h-[20px] text-[13px] ${tone}">
          <span class="flex items-center w-[108px] pl-[10px] border-b border-r border-dotted border-[#777]">${label}</span>
          <span class="flex items-center flex-1 ${val}">${escaped}</span>
        </div>`;
      };

      document.getElementById("props").innerHTML = props.map(propToHTML).join("");

      // level, expander (+ / - / none), label, icon
      const tree = [
        [0, "-", "视图 (全部)", "views"], [1, "-", "楼层平面"], [2, "", "场地"], [2, "", "标高 1", "sel"], [2, "", "标高 2"],
        [1, "+", "天花板平面"], [1, "-", "三维视图"], [2, "", "{三维}", "bold"], [1, "-", "立面 (建筑立面)"],
        [2, "", "东"], [2, "", "北"], [2, "", "南"], [2, "", "西"],
        [1, "+", "面积平面 (人防分区面积)"], [1, "+", "面积平面 (净面积)"], [1, "+", "面积平面 (总建筑面积)"], [1, "+", "面积平面 (防火分区面积)"],
        [0, "", "图例", "legend"], [0, "+", "明细表/数量", "table"], [0, "", "图纸 (全部)", "sheet"], [0, "-", "族", "family"],
        [1, "-", "停车场"], [2, "-", "停车位"],
        [3, "", "4800 x 2400mm - 60 度"], [3, "", "4800 x 2400mm - 70 度"], [3, "", "4800 x 2400mm - 80 度"], [3, "", "4800 x 2400mm - 90 度"],
        [1, "+", "分割轮廓"], [1, "-", "场地"], [2, "-", "建筑地坪"], [3, "", "平地"], [3, "", "建筑地坪 1"], [2, "-", "篮球场"], [3, "", "篮球场"],
        [1, "+", "坡道"], [1, "+", "填充图案"], [1, "+", "墙"], [1, "+", "天花板"], [1, "+", "家具"], [1, "+", "屋顶"], [1, "+", "幕墙嵌板"],
      ];

      const textPad = ["pl-[42px]", "pl-[46px]", "pl-[66px]", "pl-[86px]"];
      const expLeft = ["left-[3px]", "left-[23px]", "left-[43px]"];
      const lineX = [7.5, 27.5, 47.5, 67.5];
      const lineEnd = [13, 42, 62, 82];

      const icons = {
        views: `<path d="M1 5V1h4M11 1h4v4M15 11v4h-4M5 15H1v-4" stroke="#222" fill="none" /><rect x="4" y="4" width="8" height="8" rx="2" fill="none" stroke="#555" />`,
        legend: `<rect x="0.500" y="0.500" width="15" height="15" fill="#eee" stroke="#333" /><path d="M0 4h16" stroke="#333" stroke-width="2" /><path d="M3 7h3M8 7h5M3 10h3M8 10h5M3 13h3M8 13h5" stroke="#444" />`,
        table: `<rect x="0.500" y="2.500" width="15" height="12" fill="#f5f5f5" stroke="#333" /><path d="M0 5h16M0 8h16M0 11h16M5 3v12" stroke="#555" />`,
        sheet: `<path d="M1 2h10l4 4v9H1z" fill="#f5f5f5" stroke="#333" /><rect x="3" y="8" width="6" height="5" fill="none" stroke="#555" />`,
        family: `<path d="M1 1h6v6H1zM1 9h14V1H9v8" fill="none" stroke="#222" /><path d="M1 15h14" stroke="#222" />`,
      };

      const rowToHTML = ([level, exp, label, mark], i) => {
        const box = exp
          ? `<span class="absolute ${expLeft[level]} top-[5px] flex items-center justify-center w-[9px] h-[9px] border border-[#999] bg-[#eee] text-[#333]"><span class="w-[5px] h-[1px] bg-[#333]"></span>${exp === "+" ? '<span class="absolute w-[1px] h-[5px] bg-[#333]"></span>' : ""}</span>`
          : "";
        const icon = icons[mark]
          ? `<svg class="absolute left-[21px] top-[2px] w-[16px] h-[16px]" viewBox="0 0 16 16">${icons[mark]}</svg>`
          : "";
        const look = mark === "sel" ? "bg-[#e0e0e0] px-[2px] -ml-[2px] h-[19px] flex items-center" : mark === "bold" ? "font-bold" : "";
        return `<div class="relative flex items-center h-[20px] ${textPad[level]} text-[13px] whitespace-nowrap">${box}${icon}<span class="${look}">${label}</span></div>`;
      };

      // dotted connector lines, worked out from the row levels
      let d = "";
      tree.forEach(([level], i) => {
        const y = i * 20 + 12;
        if (level > 0) {
          let p = i - 1;
          while (tree[p][0] !== level - 1) p--;
          d += `M${lineX[level - 1]} ${p * 20 + 12}V${y}H${lineEnd[level]}`;
        } else if (i > 0) {
          let p = i - 1;
          while (tree[p][0] !== 0) p--;
          d += `M${lineX[0]} ${p * 20 + 12}V${y}H${lineEnd[0] + 2}`;
        }
      });

      document.getElementById("tree").innerHTML = `
        <svg class="absolute left-0 top-0 w-[300px] h-[840px]" viewBox="0 0 300 840"><path d="${d}" fill="none" stroke="#999" stroke-dasharray="1 1" /></svg>
        ${tree.map(rowToHTML).join("")}
      `;
    </script>
  </body>
</html>
